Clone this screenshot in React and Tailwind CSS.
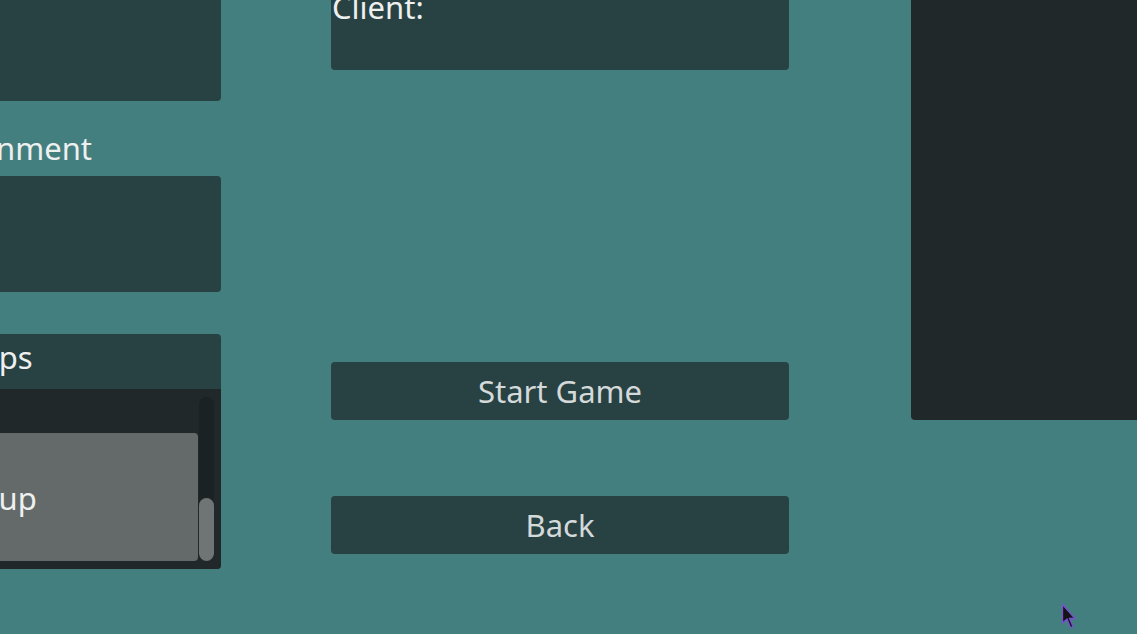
export default function App() {
  return (
    <div
      className="relative w-[1137px] h-[634px] overflow-hidden bg-[#437f7f] text-[31px] leading-[42px] text-[#eef0f0] flex items-start"
      style={{ fontFamily: '"Noto Sans", "DejaVu Sans", sans-serif' }}
    >
      {/* left column, clipped at the window edge */}
      <div className="ml-[-120px] w-[341px] shrink-0 flex flex-col">
        <div className="h-[151px] mt-[-50px] rounded-[4px] bg-[#284244]" />
        <div className="mt-[26px] pl-[25px] whitespace-nowrap">Environment</div>
        <div className="mt-[7px] h-[116px] rounded-[4px] bg-[#284244]" />
        <div className="mt-[42px] h-[235px] rounded-[4px] bg-[#284244] flex flex-col">
          <div className="h-[55px] pl-[46px] pt-[2px] whitespace-nowrap">Groups</div>
          <div className="flex-1 rounded-b-[4px] bg-[#212829] flex pb-[8px]">
            <div className="flex-1 flex flex-col pt-[44px]">
              <div className="flex-1 rounded-r-[4px] bg-[#636a69] flex items-center pl-[65px] pt-[2px] whitespace-nowrap">
                Group
              </div>
            </div>
            <div className="w-[15px] mx-[1px] mr-[7px] mt-[8px] rounded-full bg-[#1b2223] flex flex-col justify-end">
              <div className="h-[63px] rounded-full bg-[#6f7474]" />
            </div>
          </div>
        </div>
      </div>

      {/* center column */}
      <div className="ml-[110px] w-[458px] shrink-0 flex flex-col">
        <div className="h-[120px] mt-[-50px] rounded-[4px] bg-[#284244] pl-[1px] pt-[36px]">
          <div className="whitespace-nowrap">Client:</div>
        </div>
        <button className="mt-[292px] h-[58px] rounded-[4px] bg-[#284244] text-[#d4d9d9] flex items-center justify-center">
          Start Game
        </button>
        <button className="mt-[76px] h-[58px] rounded-[4px] bg-[#284244] text-[#d4d9d9] flex items-center justify-center">
          Back
        </button>
      </div>

      {/* right panel */}
      <div className="ml-[122px] w-[260px] h-[420px] shrink-0 rounded-bl-[4px] bg-[#212829]" />

      {/* mouse pointer */}
      <svg className="absolute left-[1061px] top-[603px]" width="18" height="28" viewBox="0 0 18 28">
        <path
          d="M1.5 1.5 L1.5 20 L6 16 L9.5 24.5 L12 23.5 L8.5 15.5 L14 15.5 Z"
          fill="#141414"
          stroke="#7a4fd6"
          strokeWidth="1.3"
          strokeLinejoin="miter"
        />
      </svg>
    </div>
  );
}
